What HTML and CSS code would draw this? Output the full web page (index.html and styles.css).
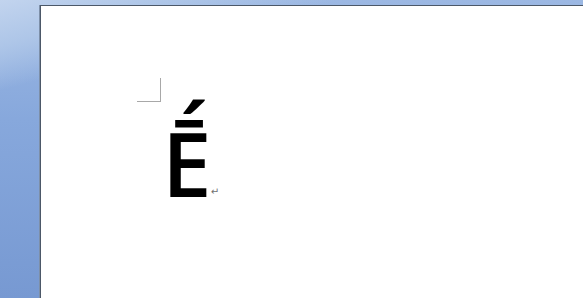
FILE: index.html
```html
<!DOCTYPE html>
<html>
<head>
<meta charset="utf-8">
<link rel="stylesheet" href="styles.css">
</head>
<body>
<div class="workspace">
  <div class="page">
    <div class="corner"></div>
    <div class="line"><span class="glyph">Ḗ</span><span class="mark">↵</span></div>
  </div>
</div>
</body>
</html>
```
FILE: styles.css
```css
html, body {
  margin: 0;
  padding: 0;
  width: 583px;
  height: 298px;
  overflow: hidden;
}
.workspace {
  width: 583px;
  height: 298px;
  background:
    linear-gradient(165deg, #c2d4ee 0%, #aec6e8 10%, rgba(150,180,225,0) 20%),
    linear-gradient(180deg, #9cb8e3 0%, #87a8dc 40%, #7799d2 100%);
  padding: 5px 0 0 40px;
  box-sizing: border-box;
  display: flex;
}
.page {
  flex: 1;
  background: #ffffff;
  border-left: 1px solid #4c5868;
  border-top: 1px solid #4c5868;
  box-shadow: -1px 0 0 #7d8fa8;
  display: flex;
  flex-direction: column;
}
.corner {
  width: 23px;
  height: 23px;
  margin-left: 96px;
  margin-top: 72px;
  border-right: 1px solid #a8a8a8;
  border-bottom: 1px solid #a8a8a8;
}
.line {
  margin-left: 121px;
  margin-top: 15px;
  display: flex;
  align-items: baseline;
  font-family: "Open Sans", sans-serif;
  color: #000;
}
.glyph {
  font-size: 89px;
  line-height: 92px;
  font-weight: 600;
  letter-spacing: -4px;
}
.mark {
  font-family: "DejaVu Sans", sans-serif;
  font-size: 10px;
  color: #707070;
  margin-left: 3px;
  position: relative;
  top: -2px;
}
```
